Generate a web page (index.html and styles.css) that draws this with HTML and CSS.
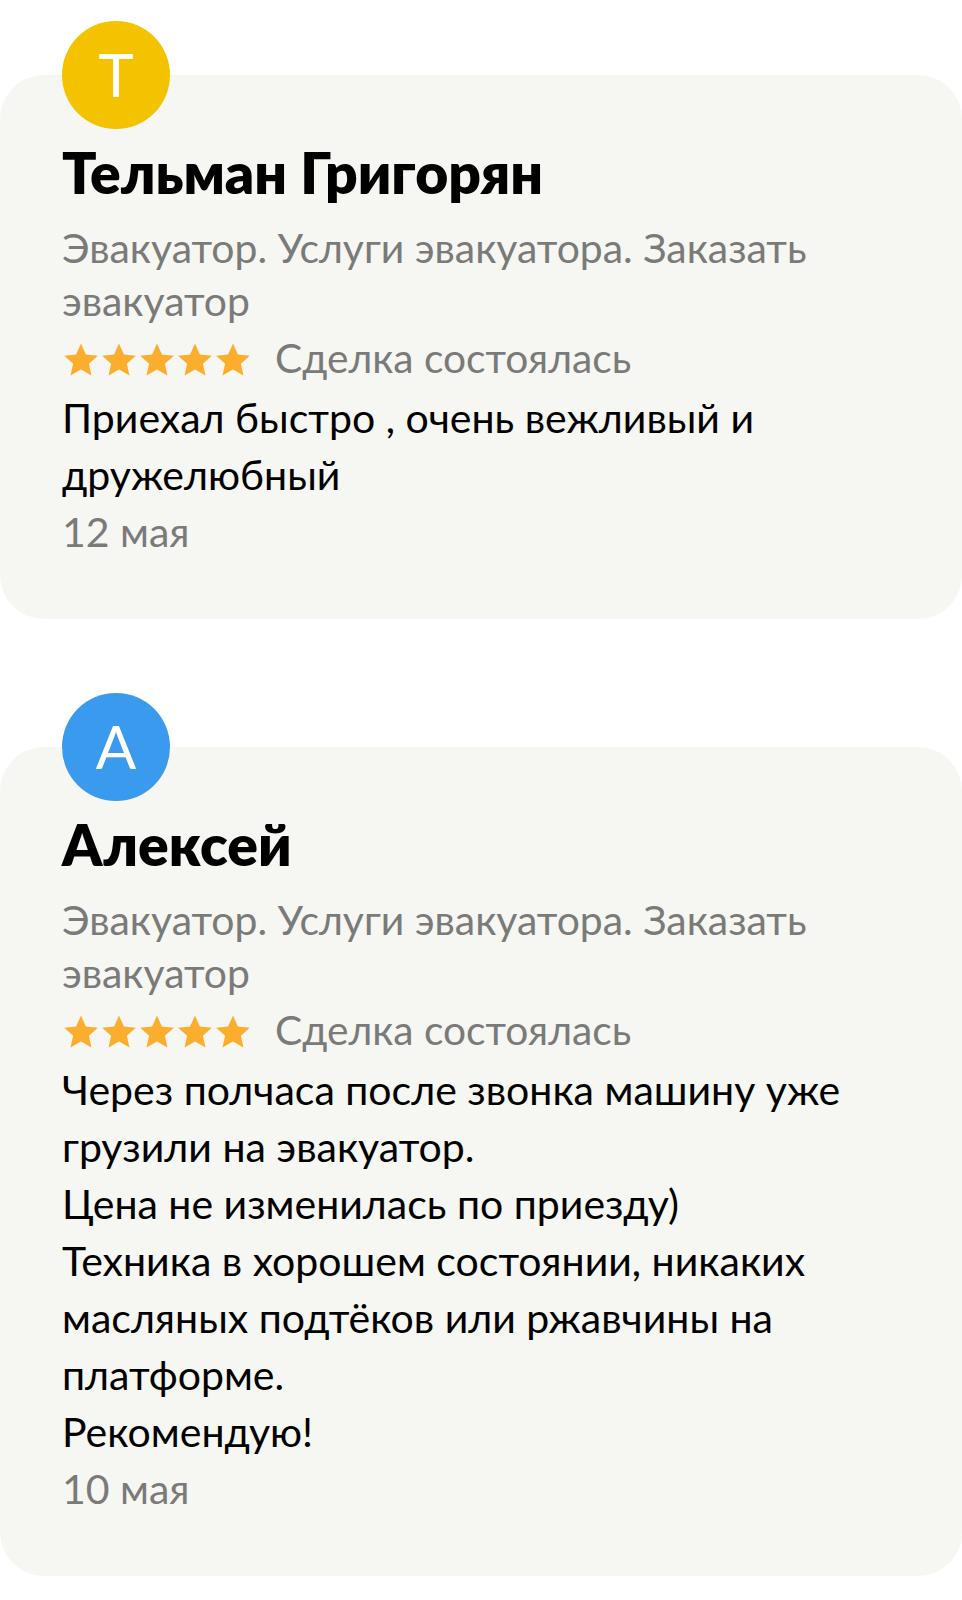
FILE: index.html
```html
<!DOCTYPE html>
<html lang="ru">
<head>
  <meta charset="UTF-8">
  <title>Отзывы</title>
  <link rel="stylesheet" href="styles.css">
</head>
<body>
  <div class="reviews">
    <!-- отзыв 1 -->
    <div class="review">
      <div class="avatar avatar-yellow">Т</div>
      <div class="name">Тельман Григорян</div>
      <div class="service">Эвакуатор. Услуги эвакуатора. Заказать эвакуатор</div>
      <div class="meta">
        <span class="stars">
          <svg viewBox="0 0 24 24"><path d="M12 1.6l3.1 6.9 7.5.8-5.6 5.1 1.6 7.4L12 18l-6.6 3.8L7 14.4 1.4 9.3l7.5-.8z"/></svg>
          <svg viewBox="0 0 24 24"><path d="M12 1.6l3.1 6.9 7.5.8-5.6 5.1 1.6 7.4L12 18l-6.6 3.8L7 14.4 1.4 9.3l7.5-.8z"/></svg>
          <svg viewBox="0 0 24 24"><path d="M12 1.6l3.1 6.9 7.5.8-5.6 5.1 1.6 7.4L12 18l-6.6 3.8L7 14.4 1.4 9.3l7.5-.8z"/></svg>
          <svg viewBox="0 0 24 24"><path d="M12 1.6l3.1 6.9 7.5.8-5.6 5.1 1.6 7.4L12 18l-6.6 3.8L7 14.4 1.4 9.3l7.5-.8z"/></svg>
          <svg viewBox="0 0 24 24"><path d="M12 1.6l3.1 6.9 7.5.8-5.6 5.1 1.6 7.4L12 18l-6.6 3.8L7 14.4 1.4 9.3l7.5-.8z"/></svg>
        </span>
        <span class="status">Сделка состоялась</span>
      </div>
      <div class="text">Приехал быстро , очень вежливый и дружелюбный</div>
      <div class="date">12 мая</div>
    </div>

    <!-- отзыв 2 -->
    <div class="review">
      <div class="avatar avatar-blue">А</div>
      <div class="name">Алексей</div>
      <div class="service">Эвакуатор. Услуги эвакуатора. Заказать эвакуатор</div>
      <div class="meta">
        <span class="stars">
          <svg viewBox="0 0 24 24"><path d="M12 1.6l3.1 6.9 7.5.8-5.6 5.1 1.6 7.4L12 18l-6.6 3.8L7 14.4 1.4 9.3l7.5-.8z"/></svg>
          <svg viewBox="0 0 24 24"><path d="M12 1.6l3.1 6.9 7.5.8-5.6 5.1 1.6 7.4L12 18l-6.6 3.8L7 14.4 1.4 9.3l7.5-.8z"/></svg>
          <svg viewBox="0 0 24 24"><path d="M12 1.6l3.1 6.9 7.5.8-5.6 5.1 1.6 7.4L12 18l-6.6 3.8L7 14.4 1.4 9.3l7.5-.8z"/></svg>
          <svg viewBox="0 0 24 24"><path d="M12 1.6l3.1 6.9 7.5.8-5.6 5.1 1.6 7.4L12 18l-6.6 3.8L7 14.4 1.4 9.3l7.5-.8z"/></svg>
          <svg viewBox="0 0 24 24"><path d="M12 1.6l3.1 6.9 7.5.8-5.6 5.1 1.6 7.4L12 18l-6.6 3.8L7 14.4 1.4 9.3l7.5-.8z"/></svg>
        </span>
        <span class="status">Сделка состоялась</span>
      </div>
      <div class="text">Через полчаса после звонка машину уже грузили на эвакуатор.<br>Цена не изменилась по приезду)<br>Техника в хорошем состоянии, никаких масляных подтёков или ржавчины на платформе.<br>Рекомендую!</div>
      <div class="date">10 мая</div>
    </div>
  </div>
</body>
</html>
```

FILE: styles.css
```css
body {
  margin: 0;
  background: #fff;
  font-family: Lato, "Noto Sans", sans-serif;
  color: #000;
}
.reviews {
  display: flex;
  flex-direction: column;
  gap: 128px;
  padding-top: 75px;
}
.review {
  display: flex;
  flex-direction: column;
  background: #f6f6f2;
  border-radius: 44px;
  padding: 0 62px 59px 62px;
}
.avatar {
  width: 108px;
  height: 108px;
  margin-top: -54px;
  border-radius: 50%;
  color: #fff;
  font-size: 60px;
  font-weight: 400;
  line-height: 106px;
  text-align: center;
}
.avatar-yellow {
  background: #f4c300;
}
.avatar-blue {
  background: #3a9aee;
}
.name {
  margin-top: 11px;
  font-size: 57px;
  font-weight: 800;
  line-height: 64px;
}
.service {
  margin-top: 17px;
  font-size: 40.9px;
  line-height: 53px;
  color: #7a7a78;
}
.meta {
  margin-top: 2px;
  display: flex;
  align-items: center;
  font-size: 40.7px;
  line-height: 57px;
}
.stars {
  display: flex;
  margin-top: 5px;
  margin-right: 23px;
}
.stars svg {
  width: 38px;
  height: 38px;
  fill: #fbae2d;
}
.status {
  color: #7a7a78;
}
.text {
  margin-top: 3px;
  font-size: 41px;
  line-height: 57px;
}
.date {
  margin-top: 0;
  font-size: 41px;
  line-height: 57px;
  color: #7a7a78;
}
```
